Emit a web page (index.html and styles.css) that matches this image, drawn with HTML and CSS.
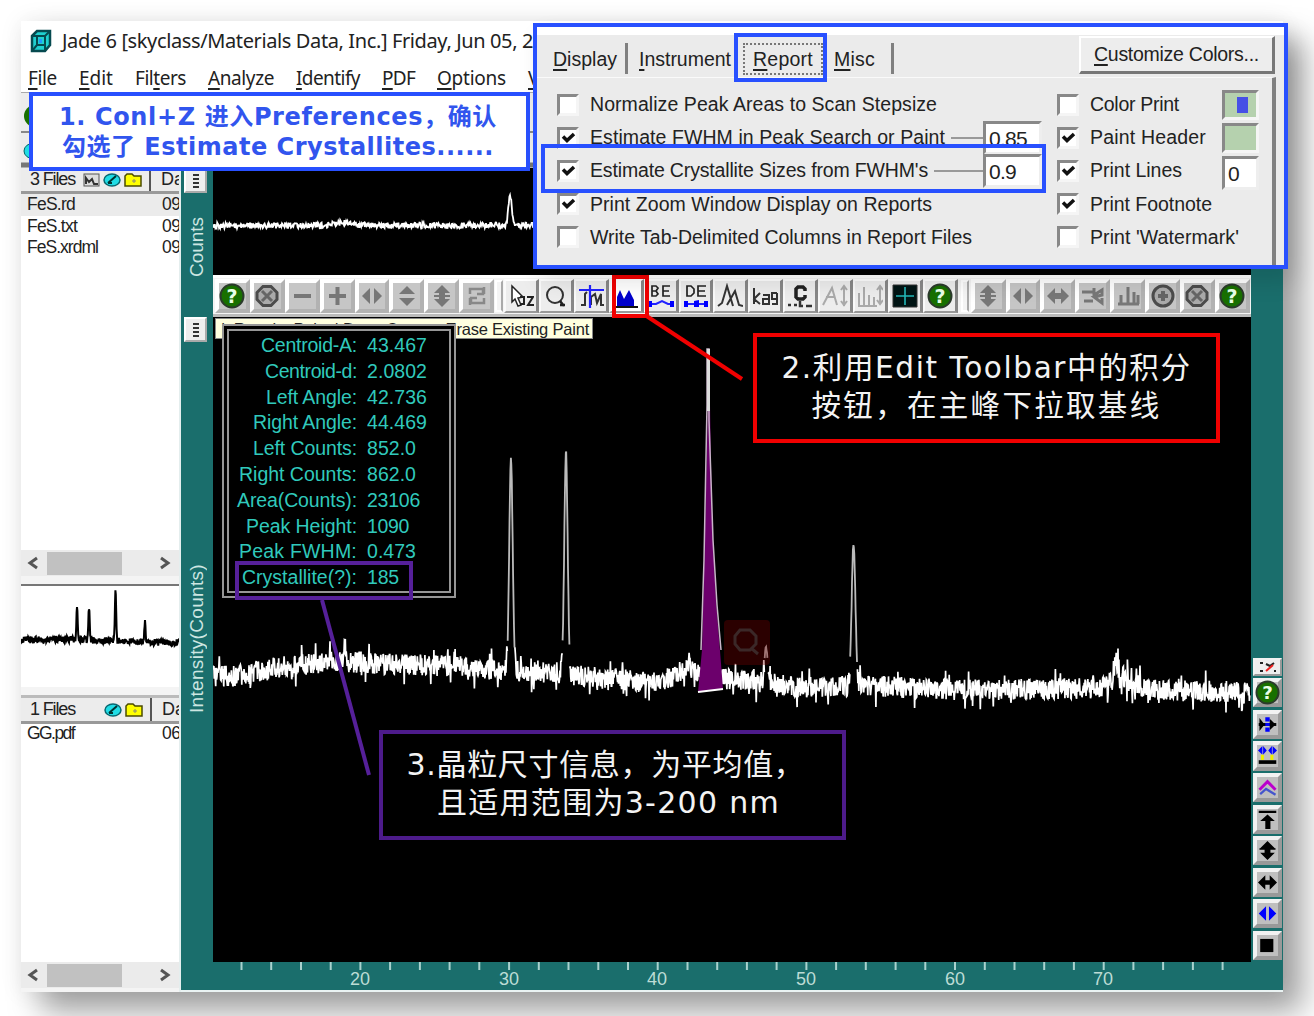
FILE: index.html
```html
<!DOCTYPE html>
<html lang="zh-CN">
<head>
<meta charset="utf-8">
<title>Jade 6</title>
<link rel="stylesheet" href="styles.css">
</head>
<body>
<svg class="defs" width="0" height="0">
  <symbol id="help" viewBox="0 0 26 26"><circle cx="13" cy="13" r="11.5" fill="#187000" stroke="#2b3b2b" stroke-width="2"/><text x="13" y="20" text-anchor="middle" fill="#e8ffe8" font-family="DejaVu Sans" font-weight="700" font-size="19">?</text></symbol>
  <symbol id="stop" viewBox="0 0 26 26"><path d="M9 3.500h8l6 6v7l-6 6H9l-6-6v-7z" fill="#aaa" stroke="#4c4c4c" stroke-width="3"/><path d="M8 8l10 10M18 8L8 18" stroke="#666" stroke-width="3"/></symbol>
  <symbol id="target" viewBox="0 0 26 26"><circle cx="13" cy="13" r="10" fill="#aaa" stroke="#4c4c4c" stroke-width="3"/><path d="M13 8v10M8 13h10" stroke="#666" stroke-width="4"/></symbol>
  <symbol id="minus" viewBox="0 0 26 26"><path d="M5 13h17" stroke="#777" stroke-width="4"/></symbol>
  <symbol id="plus" viewBox="0 0 26 26"><path d="M5 13h17M13.500 4v18" stroke="#777" stroke-width="4"/></symbol>
  <symbol id="horiz" viewBox="0 0 26 26"><path d="M11 5v16L3 13zM15 5v16l8-8z" fill="currentColor"/></symbol>
  <symbol id="vert" viewBox="0 0 26 26"><path d="M5 11h16l-8-8zM5 15h16l-8 8z" fill="currentColor"/></symbol>
  <symbol id="vertbar" viewBox="0 0 26 26"><path d="M5 10l8-8 8 8h-5v6h5l-8 8-8-8h5v-6zM5 12h16v2H5z" fill="currentColor"/></symbol>
  <symbol id="horizbar" viewBox="0 0 26 26"><path d="M10 5l-8 8 8 8v-5h6v5l8-8-8-8v5h-6z" fill="currentColor"/></symbol>
  <symbol id="cycle" viewBox="0 0 26 26"><path d="M6 11V6h13v5H13M20 15v5H7v-5h6M20 4v7M6 22v-7" fill="none" stroke="#888" stroke-width="2.500"/></symbol>
  <symbol id="shift" viewBox="0 0 26 26"><path d="M2 9h11M4 18h9M14 5v7l8-5v5l-8 2 8 6v-5" fill="none" stroke="#777" stroke-width="3"/></symbol>
  <symbol id="bars" viewBox="0 0 26 26"><path d="M3 21h21M6 21v-9M13 21V4M19 21V9M23 21v-9" stroke="#777" stroke-width="3"/></symbol>
  <symbol id="grip" viewBox="0 0 10 16"><path d="M2 2h6M2 6h6M2 10h6M2 14h6" stroke="#333" stroke-width="2"/></symbol>
  <symbol id="folder" viewBox="0 0 18 14"><path d="M1 13V3l2-2h5l2 2h7v10z" fill="#ff0" stroke="#4b4b00" stroke-width="1.500"/><path d="M10 6v4M8 8h4" stroke="#887"/></symbol>
  <symbol id="disk" viewBox="0 0 18 14"><ellipse cx="9" cy="7" rx="8" ry="6" fill="#20dce5" stroke="#096770" stroke-width="1.500"/><path d="M5 10l8-7M5 10h4" stroke="#033" stroke-width="2"/></symbol>
  <symbol id="left" viewBox="0 0 12 14"><path d="M10 2L3 7l7 5" fill="none" stroke="#555" stroke-width="3"/></symbol>
  <symbol id="right" viewBox="0 0 12 14"><path d="M2 2l7 5-7 5" fill="none" stroke="#555" stroke-width="3"/></symbol>
  <symbol id="check" viewBox="0 0 16 16"><path d="M3 6.500l4 4L14 4" fill="none" stroke="#111" stroke-width="3.500"/></symbol>
</svg>

<main class="window">
  <header class="titlebar">
    <svg width="22" height="24" viewBox="0 0 22 24"><path d="M2 7l5-5h13v14l-5 6H2z" fill="#20d0d0" stroke="#064a50" stroke-width="2.500"/><path d="M2 7h13v15M15 7l5-5M7 7v9h8M2 22l5-6" fill="none" stroke="#064a50" stroke-width="2"/><path d="M9 10h3v4H9z" fill="#29f"/></svg>
    <span data-w="471">Jade 6 [skyclass/Materials Data, Inc.] Friday, Jun 05, 2</span>
  </header>
  <nav class="menu">
    <span data-w="29"><u>F</u>ile</span><span data-w="34"><u>E</u>dit</span><span data-w="51">Fil<u>t</u>ers</span><span data-w="66"><u>A</u>nalyze</span><span data-w="64"><u>I</u>dentify</span><span data-w="33"><u>P</u>DF</span><span data-w="69"><u>O</u>ptions</span><span><u>V</u></span>
  </nav>
  <div class="strip"><svg width="513" height="76"><path d="M0 .5h513" stroke="#aaa"/><path d="M0 40h513" stroke="#888" stroke-width="2"/><path d="M0 73h513" stroke="#777" stroke-width="5"/><circle cx="14" cy="24" r="11" fill="#187000"/><ellipse cx="13" cy="59" rx="10" ry="8" fill="#20dce5" stroke="#066"/></svg></div>
  <div class="body">
    <aside class="files">
      <div class="head"><span data-w="45">3 Files</span><svg width="17" height="14"><rect x="1" y="1" width="15" height="12" fill="#ddd" stroke="#555"/><path d="M3 11V5l3 4 3-3 2 5h4" fill="none" stroke="#333" stroke-width="2"/></svg><svg width="18" height="14"><use href="#disk"/></svg><svg width="18" height="14"><use href="#folder"/></svg><i></i><span>Da</span></div>
      <ul class="list top"><li class="sel"><span data-w="48">FeS.rd</span><b>09</b></li><li><span data-w="50">FeS.txt</span><b>09</b></li><li><span data-w="71">FeS.xrdml</span><b>09</b></li></ul>
      <div class="scroll"><svg width="12" height="14"><use href="#left"/></svg><i></i><svg width="12" height="14"><use href="#right"/></svg></div>
      <div class="mini"><svg width="160" height="102"><path id="mini" fill="none" stroke="#000" stroke-width="2"/></svg></div>
      <div class="head second"><span data-w="45">1 Files</span><em></em><svg width="18" height="14"><use href="#disk"/></svg><svg width="18" height="14"><use href="#folder"/></svg><i></i><span>Da</span></div>
      <ul class="list bottom"><li><span data-w="47">GG.pdf</span><b>06</b></li></ul>
      <div class="scroll last"><svg width="12" height="14"><use href="#left"/></svg><i></i><svg width="12" height="14"><use href="#right"/></svg></div>
    </aside>
    <section class="teal">
      <div class="rail">
        <div class="railtop"><button class="grip"><svg width="10" height="16"><use href="#grip"/></svg></button><span class="rot counts" data-w="60">Counts</span></div>
        <div class="railbot"><button class="grip"><svg width="10" height="16"><use href="#grip"/></svg></button><span class="rot intensity" data-w="149">Intensity(Counts)</span></div>
      </div>
      <div class="plots">
        <svg class="overview" width="1038" height="107"><path id="over" fill="none" stroke="#fff" stroke-width="1.800"/></svg>
        <div class="tools">
          <button class="off"><svg><use href="#help"/></svg></button><button class="off"><svg><use href="#stop"/></svg></button><button class="off"><svg><use href="#minus"/></svg></button><button class="off"><svg><use href="#plus"/></svg></button><button class="off"><svg><use href="#horiz"/></svg></button><button class="off"><svg><use href="#vert"/></svg></button><button class="off"><svg><use href="#vertbar"/></svg></button><button class="off"><svg><use href="#cycle"/></svg></button>
          <i></i>
          <button><svg viewBox="0 0 26 26"><path d="M4 3l11 11-5 1 3 7-3 1-3-7-3 3z" fill="#fff" stroke="#222" stroke-width="1.500"/><path d="M12 14h4v7h-4M19 14h6l-5 8h6" fill="none" stroke="#222" stroke-width="2"/></svg></button>
          <button><svg viewBox="0 0 26 26"><circle cx="12" cy="12" r="8" fill="none" stroke="#333" stroke-width="2"/><path d="M17 18l4 5M17 22h5" stroke="#222" stroke-width="2.500"/></svg></button>
          <button><svg viewBox="0 0 26 26"><path d="M3 22h4V11l2-2M13 22v-8l4-3 2 9 4-9v11h3" fill="none" stroke="#333" stroke-width="2"/><path d="M1 7h25M12 2v23" stroke="#22f" stroke-width="2.200"/></svg></button>
          <button class="white"><svg viewBox="0 0 26 26"><path d="M4 23V14l3-7 4 9 5-9 5 10v6z" fill="#00c"/><path d="M0 24h25" stroke="#111" stroke-width="2"/></svg></button>
          <button><svg viewBox="0 0 26 26"><path d="M4 3h4l2 2-2 3 2 3-2 2H4zM4 8h5M22 3h-7v10h7M15 8h6" fill="none" stroke="#222" stroke-width="1.700"/><path d="M2 21h6l6-3 6 3h5" fill="none" stroke="#22f" stroke-width="2"/><path d="M0 18h4v6H0zM22 18h4v6h-4z" fill="#00f"/></svg></button>
          <button><svg viewBox="0 0 26 26"><path d="M4 3h4l3 3v4l-3 3H4zM23 3h-8v10h8M15 8h7" fill="none" stroke="#222" stroke-width="1.700"/><path d="M2 21h22" stroke="#22f" stroke-width="2"/><path d="M1 18h4v6H1zM11 18l5-1v7h-5zM21 18h4v6h-4z" fill="#00f"/></svg></button>
          <button><svg viewBox="0 0 26 26"><path d="M1 23l4-3 5-17 6 20M10 22l8-14 4 14 4 1" fill="none" stroke="#333" stroke-width="2"/></svg></button>
          <button><svg viewBox="0 0 26 26"><path d="M2 5v16M8 10l-6 6 6 5M11 12h6v9h-6v-5h6M25 10h-5v6h5v5h-5M25 10v11" fill="none" stroke="#333" stroke-width="2"/></svg></button>
          <button><svg viewBox="0 0 26 26"><path d="M18 8V6l-2-2h-5L9 6v8l2 2h5l2-2v-2" fill="none" stroke="#222" stroke-width="3.500"/><path d="M1 22h3M7 22h3M13 18v5h3M19 23h6" fill="none" stroke="#333" stroke-width="2.500"/></svg></button>
          <button><svg viewBox="0 0 26 26"><path d="M1 22l9-17 5 17M4 14h9M22 3v20M19 7l3-4 3 4M19 18l3 4 3-4" fill="none" stroke="#aaa" stroke-width="2"/></svg></button>
          <button><svg viewBox="0 0 26 26"><path d="M2 22V10M7 22V4M12 22V12M17 22v-8M1 23h19M23 3v18M20 7l3-4 3 4M20 17l3 4 3-4" fill="none" stroke="#aaa" stroke-width="2"/></svg></button>
          <button><svg viewBox="0 0 26 26"><path d="M1 2h24v22H1z" fill="#001414" stroke="#333"/><path d="M4 13h18M13 4v18" stroke="#22b8b8" stroke-width="1.600"/></svg></button>
          <button><svg><use href="#help"/></svg></button>
          <i class="wide"></i>
          <button class="off"><svg><use href="#vertbar"/></svg></button><button class="off"><svg><use href="#horiz"/></svg></button><button class="off"><svg><use href="#horizbar"/></svg></button><button class="off"><svg><use href="#shift"/></svg></button><button class="off"><svg><use href="#bars"/></svg></button><button class="off"><svg><use href="#target"/></svg></button><button class="off"><svg><use href="#stop"/></svg></button><button class="off"><svg><use href="#help"/></svg></button>
        </div>
        <svg class="spectrum" width="1038" height="645" viewBox="213 317 1038 645">
          <path id="flanks" fill="none" stroke="#bbb" stroke-width="1.800"/>
          <path id="trace" fill="none" stroke="#fff" stroke-width="1.700"/>
          <path d="M704 570L708 405L710 405L712 520L716 600L723 689L698 692L702 650z" fill="#6c006c"/>
          <path d="M701 650L704 560L707 405V349L709 349V420L713 540L717 605L721 650" fill="none" stroke="#c9b5c9" stroke-width="1.500"/>
          <path d="M707 349h3v62h-3z" fill="#ddd"/>
          <path d="M698 692L723 689" stroke="#fff" stroke-width="2"/>
          <rect x="724" y="620" width="46" height="45" rx="4" fill="#700" fill-opacity=".36"/>
          <path d="M740 630h10l6 6v8l-6 6h-10l-5-6v-8zM751 648l7 6" fill="none" stroke="#3b2828" stroke-width="3"/>
        </svg>
        <svg class="axis" width="1038" height="28" viewBox="213 962 1038 28">
          <path id="ticks" stroke="#a9d2ce" stroke-width="2"/>
          <g class="nums"><text x="360" y="985">20</text><text x="509" y="985">30</text><text x="657" y="985">40</text><text x="806" y="985">50</text><text x="955" y="985">60</text><text x="1103" y="985">70</text></g>
        </svg>
      </div>
      <div class="side">
        <button class="short"><svg viewBox="0 0 20 12"><path d="M2 2h3M2 10h3M8 3l4 2 4-3M16 10h2" stroke="#222" stroke-width="2" fill="none"/><path d="M8 10l7-6" stroke="#e22" stroke-width="2"/></svg></button>
        <button><svg class="big"><use href="#help"/></svg></button>
        <button><svg viewBox="0 0 26 26"><path d="M2 4v18l7-9zM24 13l-8-8v16z"/><path d="M1 13h24" stroke="#000" stroke-width="4"/><path d="M10 3h6v6h-6zM10 17h6v6h-6zM10 11h6v4h-6z" fill="#00f"/></svg></button>
        <button><svg viewBox="0 0 26 26"><path d="M0 6l6-6v12zM26 6l-6-6v12zM7 0l5 6-5 6zM19 0l-5 6 5 6z" fill="#00f"/><path d="M6 12v7M19 12v7" stroke="#ee0" stroke-width="4"/><path d="M1 22h24" stroke="#000" stroke-width="5"/></svg></button>
        <button><svg viewBox="0 0 26 26"><path d="M2 16L13 5l11 11" fill="none" stroke="#b0c" stroke-width="4"/><path d="M3 22l8-7 13 8" fill="none" stroke="#45c" stroke-width="3"/></svg></button>
        <button><svg viewBox="0 0 26 26"><path d="M1 1h24v3H1zM13 6l10 9h-6v11h-7V15H3z"/></svg></button>
        <button><svg viewBox="0 0 26 26"><path d="M13 0l10 10h-6v6h6L13 26 3 16h6v-6H3zM2 10h22v2H2z"/></svg></button>
        <button><svg viewBox="0 0 26 26"><path d="M0 13L10 3v7h6V3l10 10-10 10v-7h-6v7z"/></svg></button>
        <button><svg viewBox="0 0 26 26"><path d="M11 3v20L1 13zM15 3v20l10-10z" fill="#00f"/></svg></button>
        <button><svg viewBox="0 0 26 26"><path d="M3 4h18v18H3z"/></svg></button>
      </div>
    </section>
  </div>
</main>

<div class="tip"><span data-w="368">|&nbsp; Repaint Paint | Deep Counts: Erase Existing Paint</span></div>
<dl class="readout">
  <dt data-w="96">Centroid-A:</dt><dd data-w="60">43.467</dd>
  <dt data-w="92">Centroid-d:</dt><dd data-w="60">2.0802</dd>
  <dt data-w="91">Left Angle:</dt><dd data-w="60">42.736</dd>
  <dt data-w="104">Right Angle:</dt><dd data-w="60">44.469</dd>
  <dt data-w="104">Left Counts:</dt><dd data-w="49">852.0</dd>
  <dt data-w="118">Right Counts:</dt><dd data-w="49">862.0</dd>
  <dt data-w="120">Area(Counts):</dt><dd data-w="53">23106</dd>
  <dt data-w="111">Peak Height:</dt><dd data-w="42">1090</dd>
  <dt data-w="118">Peak FWHM:</dt><dd data-w="49">0.473</dd>
  <dt data-w="115">Crystallite(?):</dt><dd data-w="32">185</dd>
</dl>
<div class="mark crystal"></div>
<div class="mark integrate"></div>
<svg class="leaders" width="1314" height="1016"><path d="M645 315L742 379" stroke="#f00000" stroke-width="4"/><path d="M322 600L369 775" stroke="#56209a" stroke-width="4"/></svg>

<section class="note one"><p><span data-w="438">1. Conl+Z 进入Preferences，确认</span></p><p><span data-w="432">勾选了 Estimate Crystallites......</span></p></section>
<section class="note two"><p><span data-w="410">2.利用Edit Toolbar中的积分</span></p><p><span data-w="350">按钮，在主峰下拉取基线</span></p></section>
<section class="note three"><p><span data-w="398">3.晶粒尺寸信息，为平均值，</span></p><p><span data-w="343">且适用范围为3-200 nm</span></p></section>

<section class="prefs">
  <div class="tabs">
    <span class="tab" data-w="64"><u>D</u>isplay</span><i></i><span class="tab" data-w="92"><u>I</u>nstrument</span><span class="tab active"><span data-w="60"><u>R</u>eport</span></span><span class="tab" data-w="41"><u>M</u>isc</span><i></i>
    <button class="colors"><span data-w="165"><u>C</u>ustomize Colors...</span></button>
  </div>
  <div class="opts">
    <div class="col">
      <div class="row"><b class="box"></b><span data-w="347">Normalize Peak Areas to Scan Stepsize</span></div>
      <div class="row"><b class="box"><svg><use href="#check"/></svg></b><span data-w="355">Estimate FWHM in Peak Search or Paint</span><hr><b class="field"><span data-w="38">0.85</span></b></div>
      <div class="row"><b class="box"><svg><use href="#check"/></svg></b><span data-w="338">Estimate Crystallite Sizes from FWHM's</span><hr><b class="field"><span data-w="27">0.9</span></b></div>
      <div class="row"><b class="box"><svg><use href="#check"/></svg></b><span data-w="342">Print Zoom Window Display on Reports</span></div>
      <div class="row"><b class="box"></b><span data-w="382">Write Tab-Delimited Columns in Report Files</span></div>
    </div>
    <div class="col right">
      <div class="row"><b class="box"></b><span data-w="89">Color Print</span><b class="swatch"><i></i></b></div>
      <div class="row"><b class="box"><svg><use href="#check"/></svg></b><span data-w="116">Paint Header</span><b class="swatch"></b></div>
      <div class="row"><b class="box"><svg><use href="#check"/></svg></b><span data-w="92">Print Lines</span><b class="field small">0</b></div>
      <div class="row"><b class="box"><svg><use href="#check"/></svg></b><span data-w="122">Print Footnote</span></div>
      <div class="row"><b class="box"></b><span data-w="149">Print 'Watermark'</span></div>
    </div>
  </div>
  <div class="mark report"></div>
  <div class="mark fwhm"></div>
</section>
<script src="app.js"></script>
</body>
</html>
```
FILE: styles.css
```css
* { box-sizing: border-box; }
body { margin: 0; width: 1314px; height: 1016px; overflow: hidden; position: relative; background: #fff; font-family: "Liberation Sans", sans-serif; color: #222; }
.defs { display: none; }
svg { display: block; flex: none; }
button { padding: 0; border: 0; border-radius: 0; font: inherit; color: inherit; display: flex; align-items: center; justify-content: center; flex: none; }
p, ul, dl { margin: 0; padding: 0; list-style: none; }
u { text-underline-offset: 3px; text-decoration-thickness: 2px; }
[data-w] { white-space: nowrap; }

.window { width: 1262px; height: 971px; margin: 21px; background: #f4f4f4; display: flex; flex-direction: column; box-shadow: 20px 20px 30px rgba(0,0,0,.36), 0 0 22px rgba(0,0,0,.08); overflow: hidden; }
.titlebar { height: 39px; background: #fff; display: flex; align-items: center; gap: 10px; padding-left: 9px; font: 20px "Noto Sans", sans-serif; flex: none; }
.menu { height: 32px; background: #fff; display: flex; align-items: center; gap: 22px; padding: 4px 0 0 7px; font: 19px "Noto Sans", sans-serif; flex: none; }
.strip { height: 76px; background: #ececec; flex: none; }
.body { flex: 1; display: flex; min-height: 0; }

.files { width: 160px; background: #f4f4f4; flex: none; display: flex; flex-direction: column; border-right: 2px solid #e4eeee; overflow: hidden; }
.head { height: 26px; display: flex; align-items: center; gap: 3px; padding-left: 9px; background: #ececec; border-bottom: 3px solid #999; font-size: 18px; flex: none; overflow: hidden; }
.head svg:first-of-type { margin-left: 5px; }
.head i { width: 2px; height: 24px; background: #555; margin: 0 7px 0 4px; flex: none; }
.head.second { margin-top: 8px; border-top: 3px solid #bbb; height: 29px; }
.head em { width: 18px; flex: none; }
.list { background: #fff; font-size: 17.500px; }
.list li { height: 21.500px; display: flex; justify-content: space-between; align-items: center; padding-left: 6px; overflow: hidden; }
.list .sel { background: #ebebeb; }
.list b { font-weight: 400; width: 17px; overflow: hidden; flex: none; letter-spacing: -.5px; }
.list.top { height: 356px; }
.list.bottom { height: 238px; }
.list.bottom li { margin-top: -1px; }
.scroll { height: 26px; background: #ebebeb; display: flex; align-items: center; padding-left: 6px; flex: none; }
.scroll i { width: 75px; height: 23px; background: #c1c1c1; margin: 0 37px 0 8px; flex: none; }
.mini { height: 103px; margin-top: 8px; border-top: 2px solid #777; background: #fff; flex: none; }

.teal { flex: 1; background: #1a6e6c; display: flex; border-bottom: 2px solid #eaf3f3; min-width: 0; }
.rail { width: 32px; flex: none; color: #cde6e2; }
.railtop, .railbot { display: flex; flex-direction: column; align-items: center; }
.railtop { height: 149px; }
.grip { width: 23px; height: 25px; background: #eee; border: 2px solid #fff; border-right-color: #aaa; border-bottom-color: #aaa; flex: none; margin-right: 3px; }
.rot { writing-mode: vertical-rl; transform: rotate(180deg); font-size: 19px; line-height: 22px; }
.counts { margin-top: 24px; }
.intensity { margin-top: 222px; }
.plots { width: 1038px; flex: none; display: flex; flex-direction: column; }
.overview, .spectrum { background: #000; }
.tools { height: 42px; background: #f4f4f4; border-top: 3px solid #fff; border-bottom: 3px solid #bbb; display: flex; align-items: center; padding: 0 1px 0 2px; flex: none; }
.tools button { width: 34.900px; height: 34px; background: #ededed; border-right: 3px solid #888; border-bottom: 2px solid #999; border-top: 2px solid #fff; border-left: 2px solid #fafafa; }
.tools .white { background: #fff; }
.tools svg { width: 26px; height: 26px; }
.tools .off { border-right: 4px solid #b2b2b2; border-bottom: 4px solid #b2b2b2; background: #c6c6c6; border-top: 4px solid #fff; border-left: 4px solid #fff; color: #777; }
.tools > i { width: 8px; height: 32px; border: 2px solid #fff; border-right-color: #aaa; margin: 0 1px; flex: none; }
.tools > .wide { margin: 0 2px 0 3px; }
.axis { overflow: visible; }
.nums { fill: #bcdcd5; font-size: 18px; text-anchor: middle; }
.side { flex: 1; display: flex; flex-direction: column; justify-content: flex-end; padding: 0 1px 30px 2px; gap: 2.400px; }
.side button { width: 29px; height: 29.200px; background: #bfbfbf; border: 4px solid #f2f2f2; border-right-color: #999; border-bottom-color: #999; }
.side .short { height: 18px; background: #eee; border-width: 2px; }
.side svg { width: 19px; height: 19px; }
.side .short svg { width: 20px; height: 12px; }
.side .big { width: 25px; height: 25px; }

.tip { position: absolute; left: 215px; top: 318px; width: 378px; height: 21px; background: #ffffdf; font-size: 16.500px; line-height: 20px; padding-left: 5px; overflow: hidden; border: 1px solid #888; }
.readout { position: absolute; left: 222px; top: 324px; width: 234px; height: 274px; background: #000; border: 7px double #969696; display: grid; grid-template-columns: 128px 1fr; column-gap: 10px; grid-auto-rows: 25.800px; align-content: start; padding-top: 1px; font-size: 19.500px; line-height: 26px; color: #30c9bc; }
.readout dt { justify-self: end; }
.readout dd { margin: 0; justify-self: start; }
.mark { position: absolute; border: 4px solid #2850ff; }
.crystal { left: 235px; top: 561px; width: 178px; height: 39px; border-color: #56209a; }
.integrate { left: 612px; top: 275px; width: 37px; height: 43px; border-color: #f00000; }
.leaders { position: absolute; left: 0; top: 0; }

.note { position: absolute; text-align: center; font-family: "DejaVu Sans", "Noto Sans CJK SC", sans-serif; }
.one { left: 29px; top: 92px; width: 501px; height: 79px; border: 4px solid #2850ff; background: #fff; color: #3155ee; font-weight: 700; font-size: 24px; line-height: 30px; padding-top: 6px; }
.two { left: 753px; top: 333px; width: 467px; height: 110px; border: 4px solid #f00000; background: #000; color: #f3f3f3; font-size: 29.500px; line-height: 38px; padding-top: 12px; }
.three { left: 379px; top: 730px; width: 467px; height: 110px; border: 4px solid #4d1b8b; background: #000; color: #f3f3f3; font-size: 30px; line-height: 38px; padding: 12px 14px 0 0; }
.one p { padding-right: 3px; }
.three p + p { padding-left: 6px; }

.prefs { position: absolute; left: 533px; top: 23px; width: 755px; height: 246px; border: 4px solid #2850ff; background: #ebebeb; font-size: 19.500px; box-shadow: inset 0 8px #fff, 8px 12px 22px rgba(0,0,0,.12); }
.tabs { height: 50px; display: flex; align-items: center; padding: 13px 0 0 16px; }
.tab { height: 28px; line-height: 28px; flex: none; }
.tabs > i { width: 3px; height: 31px; background: #808080; margin: 0 11px 0 8px; }
.tab.active { border: 2px dotted #777; padding: 0 8px; line-height: 29px; margin: 0 11px 0 12px; height: 32px; width: 80px; }
.tabs .tab:nth-last-child(3) { margin-right: 8px; }
.colors { width: 196px; height: 38px; margin: -8px 9px 0 auto; background: #ededed; border-top: 2px solid #fff; border-left: 2px solid #fff; border-bottom: 3px solid #777; border-right: 3px solid #777; }
.opts { display: flex; padding: 10px 0 0 20px; margin-right: 8px; height: 188px; border-top: 1px solid #fafafa; border-right: 4px solid #808080; }
.col { width: 500px; flex: none; }
.col.right { width: 206px; }
.row { height: 33.200px; display: flex; align-items: center; }
.box { width: 22px; height: 22px; background: #fff; border: 3px solid #888; border-right-color: #f5f5f5; border-bottom-color: #f5f5f5; margin-right: 11px; flex: none; }
.box svg { width: 16px; height: 16px; }
.row hr { flex: 1; border: 0; border-top: 2px solid #999; margin: 0 0 0 6px; }
.field { width: 59px; height: 34px; background: #fff; border: 3px solid #888; border-right-color: #eee; border-bottom-color: #eee; margin-right: 15px; padding-left: 3px; line-height: 30px; font-weight: 400; font-size: 21px; flex: none; }
.field.small { width: 37px; margin: 5px 4px 0 auto; }
.swatch { width: 37px; height: 30px; background: #b5d1ae; border: 3px solid #888; border-right-color: #f5f5f5; border-bottom-color: #f5f5f5; margin: 0 4px 0 auto; display: flex; align-items: center; justify-content: center; }
.swatch i { width: 11px; height: 16px; background: #4650e6; margin-left: 4px; }
.report { left: 197px; top: 6px; width: 93px; height: 49px; }
.fwhm { left: 4px; top: 117px; width: 505px; height: 49px; }
```
FILE: app.js
```js
// Spread each label to its nominal width through letter spacing.
document.querySelectorAll('[data-w]').forEach(function (el) {
  var vertical = el.classList.contains('rot');
  var range = document.createRange();
  range.selectNodeContents(el);
  var r = range.getBoundingClientRect();
  var now = vertical ? r.height : r.width;
  el.style.letterSpacing = (el.dataset.w - now) / el.textContent.length + 'px';
});

var seed = 77;
function rnd() { seed = (seed * 16807) % 2147483647; return seed / 2147483647; }
function interp(points, x) {
  for (var i = 1; i < points.length; i++) {
    if (x <= points[i][0]) {
      var a = points[i - 1], b = points[i];
      return a[1] + (b[1] - a[1]) * (x - a[0]) / (b[0] - a[0]);
    }
  }
  return points[points.length - 1][1];
}

// Diffraction trace: baseline, counting noise and peaks.
var base = [[213, 676], [240, 676], [280, 667], [340, 661], [380, 664], [430, 665], [500, 670], [560, 674], [620, 680], [660, 683], [690, 667], [700, 677], [740, 680], [800, 687], [870, 686], [960, 690], [1100, 688], [1112, 682], [1116, 668], [1126, 680], [1150, 690], [1251, 692]];
var peaks = [[511, 212, 1.9], [566, 222, 1.9], [766, 36, 1.8], [853.5, 142, 2.1], [345, 16, 1.5], [1116, 15, 1.5]];
var d = '', flanks = '', mode = '';
for (var x = 213; x <= 1250; x += 0.45) {
  if (x > 701 && x < 720) { mode = ''; continue; }
  var noise = (rnd() - 0.5) * 21;
  if (rnd() > 0.9) noise *= 2;
  var lift = 0;
  peaks.forEach(function (p) { lift += p[1] * Math.exp(-Math.pow((x - p[0]) / p[2], 2) / 1.6); });
  if (lift > 20) noise *= 0.2;
  var next = lift > 20 ? 'flank' : 'noise';
  var seg = (mode === next ? 'L' : 'M') + x.toFixed(1) + ' ' + (interp(base, x) + noise - lift).toFixed(1);
  if (next === 'flank') flanks += seg; else d += seg;
  mode = next;
}
document.getElementById('trace').setAttribute('d', d);
document.getElementById('flanks').setAttribute('d', flanks);

d = '';
for (x = 0; x < 330; x += 0.6) {
  var y = 57.500 + (rnd() - 0.5) * 6 - 30 * Math.exp(-Math.pow((x - 297) / 2.4, 2)) - 3 * Math.exp(-Math.pow((x - 130) / 12, 2));
  d += (d ? 'L' : 'M') + x.toFixed(1) + ' ' + y.toFixed(1);
}
document.getElementById('over').setAttribute('d', d);

d = '';
for (x = 0; x < 160; x += 0.4) {
  y = interp([[0, 54], [40, 53], [160, 57]], x) + (rnd() - 0.5) * 7;
  [[56, 33], [68, 33], [94.5, 50], [124, 20]].forEach(function (p) { y -= p[1] * Math.exp(-Math.pow((x - p[0]) / 0.9, 2)); });
  d += (d ? 'L' : 'M') + x.toFixed(1) + ' ' + y.toFixed(1);
}
document.getElementById('mini').setAttribute('d', d);

d = '';
for (var i = 0; i < 34; i++) d += 'M' + (241.5 + i * 29.73).toFixed(1) + ' 962v8';
document.getElementById('ticks').setAttribute('d', d);
```
